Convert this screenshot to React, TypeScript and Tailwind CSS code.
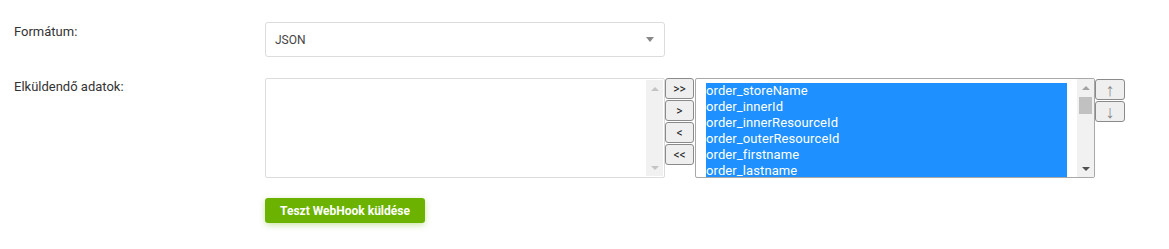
import type { ReactNode } from 'react';

const fields = [
  'order_storeName',
  'order_innerId',
  'order_innerResourceId',
  'order_outerResourceId',
  'order_firstname',
  'order_lastname',
];

function NativeButton({ children }: { children: ReactNode }) {
  return (
    <button className="flex h-[21px] w-[29px] items-center justify-center rounded-[3px] border border-[#8a8a8a] bg-[#efefef] text-[12px] leading-none text-[#222]">
      {children}
    </button>
  );
}

function Scrollbar({ active }: { active?: boolean }) {
  const arrow = active ? 'border-t-[#a3a3a3]' : 'border-t-[#c4c4c4]';
  const arrowDown = active ? 'border-t-[#505050]' : 'border-t-[#c4c4c4]';
  return (
    <div className="flex w-[17px] shrink-0 flex-col items-center bg-[#f1f1f1]">
      <div className="flex h-[17px] w-full items-center justify-center">
        <div className={`h-0 w-0 rotate-180 border-x-[4px] border-t-[4px] border-x-transparent ${arrow}`} />
      </div>
      <div className="flex-1 w-full px-[2px]">
        {active && <div className="mt-[1px] h-[17px] w-full bg-[#c1c1c1]" />}
      </div>
      <div className="flex h-[17px] w-full items-center justify-center">
        <div className={`h-0 w-0 border-x-[4px] border-t-[4px] border-x-transparent ${arrowDown}`} />
      </div>
    </div>
  );
}

export default function App() {
  return (
    <div className="h-[249px] w-[1169px] bg-white pl-[14px] pt-[22px] text-[13px] text-[#333] [font-family:Roboto,'Liberation_Sans',sans-serif]">
      <div className="flex">
        <label className="w-[251px] pt-[2px] leading-[16px]">Formátum:</label>
        <div className="flex h-[35px] w-[400px] items-center justify-between rounded-[3px] border border-[#dcdcdc] pl-[9px] pr-[10px]">
          <span className="text-[12px] text-[#444]">JSON</span>
          <div className="h-0 w-0 border-x-[4px] border-t-[5px] border-x-transparent border-t-[#888]" />
        </div>
      </div>

      <div className="mt-[21px] flex">
        <label className="w-[251px] pt-[1px] leading-[16px]">Elküldendő adatok:</label>
        <div className="flex items-start">
          <div className="flex h-[100px] w-[400px] justify-end rounded-[2px] border border-[#dcdcdc] p-[1px] pl-0">
            <Scrollbar />
          </div>
          <div className="flex w-[30px] flex-col items-start gap-[1px]">
            <NativeButton>&gt;&gt;</NativeButton>
            <NativeButton>&gt;</NativeButton>
            <NativeButton>&lt;</NativeButton>
            <NativeButton>&lt;&lt;</NativeButton>
          </div>
          <div className="flex h-[100px] w-[400px] overflow-hidden rounded-[2px] border border-[#a8a8a8] bg-white">
            <div className="flex-1 overflow-hidden pl-[10px] pr-[10px] pt-[4px]">
              {fields.map(f => (
                <div key={f} className="h-[16px] bg-[#1e90ff] text-[13px] leading-[16px] tracking-[0.1px] text-white">
                  {f}
                </div>
              ))}
            </div>
            <Scrollbar active />
          </div>
          <div className="flex flex-col gap-[1px] pt-[1px]">
            <button className="flex h-[21px] w-[30px] items-center justify-center rounded-[3px] border border-[#8a8a8a] bg-[#efefef] text-[18px] leading-none text-[#888] [font-family:'Liberation_Sans',sans-serif]">
              ↑
            </button>
            <button className="flex h-[21px] w-[30px] items-center justify-center rounded-[3px] border border-[#8a8a8a] bg-[#efefef] text-[18px] leading-none text-[#888] [font-family:'Liberation_Sans',sans-serif]">
              ↓
            </button>
          </div>
        </div>
      </div>

      <div className="mt-[20px] flex">
        <div className="w-[251px]" />
        <button className="h-[25px] w-[160px] rounded-[3px] bg-[#6bb300] text-[12px] font-bold text-white shadow-[0_2px_6px_rgba(107,179,0,0.35)]">
          Teszt WebHook küldése
        </button>
      </div>
    </div>
  );
}
